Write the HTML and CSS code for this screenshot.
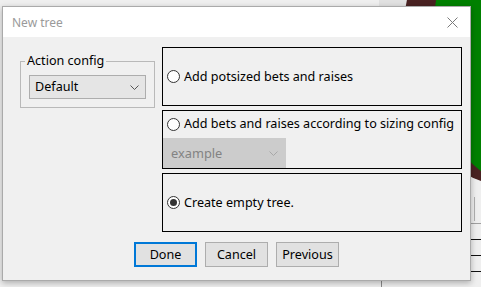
FILE: index.html
```html
<!DOCTYPE html>
<html lang="en">
<head>
<meta charset="UTF-8">
<title>New tree</title>
<link rel="stylesheet" href="styles.css">
</head>
<body>

<!-- app window behind the dialog -->
<div class="desk">
  <div class="tab-strip"></div>
  <div class="table-rim"></div>
  <div class="table-felt"></div>
  <div class="side-panel"></div>
  <div class="rule rule-1"></div>
  <div class="rule rule-2"></div>
  <div class="rule rule-3"></div>
  <div class="rule rule-4"></div>
  <div class="under-line"></div>
</div>

<div class="dialog">
  <div class="titlebar">
    <span class="title">New tree</span>
    <svg class="close" width="11" height="11" viewBox="0 0 11 11">
      <path d="M0.5 0.5 L10.5 10.5 M10.5 0.5 L0.5 10.5" stroke="#7a7a7a" stroke-width="1" fill="none"/>
    </svg>
  </div>

  <div class="content">
    <div class="columns">
      <!-- 왼쪽: action config -->
      <fieldset class="group">
        <legend>Action config</legend>
        <div class="combo">
          <span>Default</span>
          <svg width="9" height="5" viewBox="0 0 9 5"><path d="M0.5 0.5 L4.5 4.5 L8.5 0.5" stroke="#555" fill="none"/></svg>
        </div>
      </fieldset>

      <!-- 오른쪽: 옵션들 -->
      <div class="options">
        <div class="option">
          <div class="radio-row"><span class="radio"></span>Add potsized bets and raises</div>
        </div>
        <div class="option option-sizing">
          <div class="radio-row"><span class="radio"></span>Add bets and raises according to sizing config</div>
          <div class="combo combo-disabled">
            <span>example</span>
            <svg width="9" height="5" viewBox="0 0 9 5"><path d="M0.5 0.5 L4.5 4.5 L8.5 0.5" stroke="#a8a8a8" fill="none"/></svg>
          </div>
        </div>
        <div class="option">
          <div class="radio-row"><span class="radio checked"></span>Create empty tree.</div>
        </div>
      </div>
    </div>

    <div class="buttons">
      <button class="btn btn-default">Done</button>
      <button class="btn">Cancel</button>
      <button class="btn">Previous</button>
    </div>
  </div>
</div>

</body>
</html>
```

FILE: styles.css
```css
html, body {
    margin: 0;
    padding: 0;
    width: 481px;
    height: 287px;
    background-color: #efefef;
    font-family: "Noto Sans", "Open Sans", sans-serif;
    font-size: 12.6px;
    line-height: 16px;
    color: #000;
}

body {
    position: relative;
    overflow: hidden;
    padding-top: 6px;
    box-sizing: border-box;
}

/* 뒤쪽 앱 화면 */
.desk {
    position: absolute;
    left: 0;
    top: 0;
    width: 481px;
    height: 287px;
    overflow: hidden;
}

.tab-strip {
    position: absolute;
    left: 379px;
    top: 0;
    width: 40px;
    height: 6px;
    background-color: #e1e1e1;
}

/* 포커 테이블 */
.table-rim {
    position: absolute;
    left: 403px;
    top: -105px;
    width: 203px;
    height: 290px;
    border-radius: 50%;
    background-color: #4a2222;
}

.table-felt {
    position: absolute;
    left: 433px;
    top: -100px;
    width: 148px;
    height: 280px;
    border-radius: 50%;
    background-color: #008000;
}

.side-panel {
    position: absolute;
    left: 474px;
    top: 197px;
    width: 1px;
    height: 24px;
    background-color: #b0b0b0;
}

.rule {
    position: absolute;
    left: 470px;
    width: 11px;
    height: 1px;
    background-color: #111;
}

.rule-1 { top: 223px; background-color: #a0a0a0; }
.rule-2 { top: 239px; }
.rule-3 { top: 255px; }
.rule-4 { top: 271px; }

.under-line {
    position: absolute;
    left: 381px;
    top: 281px;
    width: 1px;
    height: 6px;
    background-color: #888;
}

/* 대화상자 */
.dialog {
    position: relative;
    width: 467px;
    height: 273px;
    margin-left: 2px;
    border: 1px solid #aaaaaa;
    background-color: #f0f0f0;
    box-shadow: 0 2px 6px rgba(0, 0, 0, 0.28);
    display: flex;
    flex-direction: column;
}

.titlebar {
    height: 30px;
    background-color: #fff;
    display: flex;
    align-items: center;
    justify-content: space-between;
    padding: 0 12px 0 9px;
}

.title {
    color: #9a9a9a;
    font-size: 12px;
    padding-top: 1px;
}

.close {
    display: block;
}

.content {
    padding: 10px 8px 0 17px;
}

.columns {
    display: flex;
    gap: 7px;
}

/* 그룹박스 */
.group {
    margin: 6px 0 0 0;
    padding: 6px 7px 8px 8px;
    width: 118px;
    border: 1px solid #b9b9b9;
    align-self: flex-start;
}

.group legend {
    padding: 0 2px;
    margin-left: -4px;
}

/* 콤보박스 */
.combo {
    box-sizing: border-box;
    width: 117px;
    height: 24px;
    border: 1px solid #adadad;
    background-color: #e5e5e5;
    display: flex;
    align-items: center;
    justify-content: space-between;
    padding: 0 6px 0 5px;
}

.combo svg {
    display: block;
}

.combo-disabled {
    width: 123px;
    height: 30px;
    border: none;
    background-color: #cccccc;
    color: #838383;
    padding: 0 8px 0 8px;
    font-size: 12.8px;
}

/* 옵션 프레임 */
.options {
    display: flex;
    flex-direction: column;
    gap: 4px;
}

.option {
    box-sizing: border-box;
    width: 300px;
    height: 59px;
    border: 1px solid #000;
    display: flex;
    align-items: center;
}

.option-sizing {
    flex-direction: column;
    align-items: stretch;
    justify-content: space-between;
    padding-top: 5px;
}

.radio-row {
    display: flex;
    align-items: center;
    padding-left: 4px;
}

.radio {
    box-sizing: border-box;
    width: 13px;
    height: 13px;
    border: 1px solid #333;
    border-radius: 50%;
    background-color: #fff;
    margin-right: 4px;
    display: flex;
    align-items: center;
    justify-content: center;
}

.radio.checked::after {
    content: "";
    width: 7px;
    height: 7px;
    border-radius: 50%;
    background-color: #333;
}

/* 버튼 */
.buttons {
    display: flex;
    justify-content: center;
    gap: 8px;
    margin: 10px -8px 0 -17px;
}

.btn {
    box-sizing: border-box;
    width: 63px;
    height: 25px;
    font-family: inherit;
    font-size: 12.6px;
    color: #000;
    background-color: #e1e1e1;
    border: 1px solid #adadad;
    padding: 0;
    margin: 0;
}

.btn-default {
    border-color: #0078d7;
    box-shadow: inset 0 0 0 1px #0078d7;
}
```
